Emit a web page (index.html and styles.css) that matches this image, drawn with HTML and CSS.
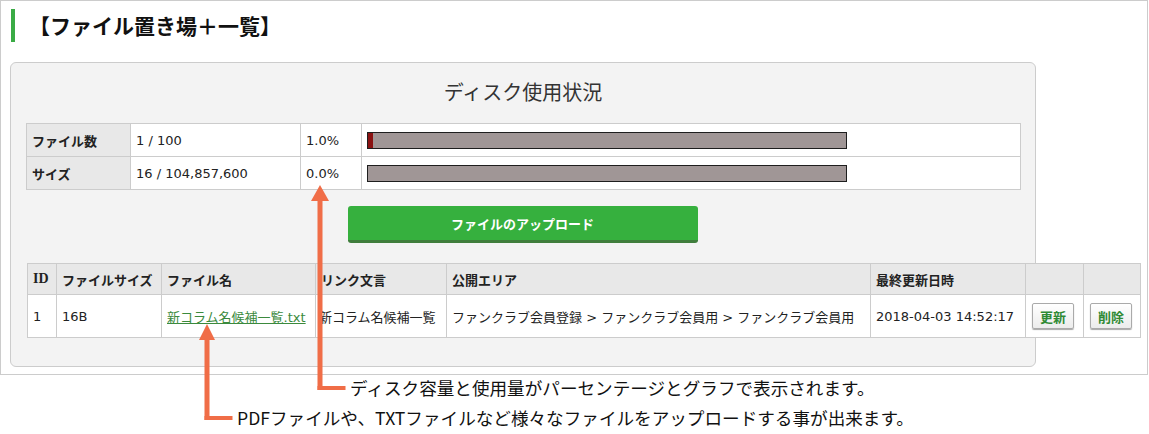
FILE: index.html
```html
<!DOCTYPE html>
<html lang="ja">
<head>
    <meta charset="UTF-8">
    <meta name="viewport" content="width=device-width, initial-scale=1.0">
    <title>ファイル置き場＋一覧</title>
    <link rel="stylesheet" href="styles.css">
</head>
<body>
    <div class="frame">
        <h2 class="heading">【ファイル置き場＋一覧】</h2>

        <div class="panel">
            <h3 class="panel-title">ディスク使用状況</h3>

            <table class="disk">
                <tr>
                    <th>ファイル数</th>
                    <td class="amount">1 / 100</td>
                    <td class="rate">1.0%</td>
                    <td><div class="bar"><div class="bar-fill" style="width: 1%"></div></div></td>
                </tr>
                <tr>
                    <th>サイズ</th>
                    <td class="amount">16 / 104,857,600</td>
                    <td class="rate">0.0%</td>
                    <td><div class="bar"><div class="bar-fill" style="width: 0%"></div></div></td>
                </tr>
            </table>

            <button class="upload">ファイルのアップロード</button>

            <table class="files">
                <colgroup>
                    <col style="width: 29px">
                    <col style="width: 105px">
                    <col style="width: 154px">
                    <col style="width: 131px">
                    <col style="width: 424px">
                    <col style="width: 155px">
                    <col style="width: 58px">
                    <col style="width: 57px">
                </colgroup>
                <thead>
                    <tr>
                        <th class="id">ID</th>
                        <th>ファイルサイズ</th>
                        <th>ファイル名</th>
                        <th>リンク文言</th>
                        <th>公開エリア</th>
                        <th>最終更新日時</th>
                        <th></th>
                        <th></th>
                    </tr>
                </thead>
                <tbody>
                    <tr>
                        <td>1</td>
                        <td>16B</td>
                        <td><a href="#">新コラム名候補一覧.txt</a></td>
                        <td class="tight">新コラム名候補一覧</td>
                        <td>ファンクラブ会員登録 &gt; ファンクラブ会員用 &gt; ファンクラブ会員用</td>
                        <td>2018-04-03 14:52:17</td>
                        <td><button class="small-btn">更新</button></td>
                        <td><button class="small-btn">削除</button></td>
                    </tr>
                </tbody>
            </table>
        </div>
    </div>

    <!-- 説明用の矢印 -->
    <svg class="arrow arrow-disk" width="40" height="210" viewBox="0 0 40 210">
        <polygon points="12,0 3,16 21,16" />
        <rect x="9.5" y="14" width="5" height="191" />
        <rect x="9.5" y="201" width="28" height="4" />
    </svg>
    <p class="note note-disk">ディスク容量と使用量がパーセンテージとグラフで表示されます。</p>

    <svg class="arrow arrow-file" width="40" height="100" viewBox="0 0 40 100">
        <polygon points="12,0 4,16 20,16" />
        <rect x="9.5" y="14" width="5" height="82" />
        <rect x="9.5" y="92" width="28" height="4" />
    </svg>
    <p class="note note-file">PDFファイルや、TXTファイルなど様々なファイルをアップロードする事が出来ます。</p>
</body>
</html>
```

FILE: styles.css
```css
body {
    margin: 0;
    font-family: "Noto Sans CJK JP", "Noto Sans", sans-serif;
    color: #222;
    background-color: #fff;
    position: relative;
    height: 434px;
}
.frame {
    width: 1148px;
    height: 375px;
    box-sizing: border-box;
    border: 1px solid #ccc;
}
.heading {
    margin: 8px 0 0 10px;
    height: 33px;
    line-height: 33px;
    border-left: 4px solid #3aab45;
    padding-left: 14px;
    font-size: 21px;
    font-weight: bold;
    color: #111;
}
.panel {
    margin: 20px 0 0 9px;
    width: 1026px;
    height: 305px;
    box-sizing: border-box;
    background-color: #f3f3f3;
    border: 1px solid #ccc;
    border-radius: 6px;
    padding: 14px 0 0 15px;
}
.panel-title {
    margin: 0;
    line-height: 30px;
    font-size: 20px;
    font-weight: normal;
    text-align: center;
    color: #333;
    padding-right: 15px;
}

/* ディスク使用状況 */
.disk {
    margin-top: 16px;
    width: 995px;
    border-collapse: collapse;
    table-layout: fixed;
    background-color: #fff;
    font-family: "DejaVu Sans", "Noto Sans CJK JP", sans-serif;
    font-size: 13px;
}
.disk th, .disk td {
    border: 1px solid #ccc;
    height: 32px;
    padding: 0 5px;
    text-align: left;
}
.disk th {
    width: 93px;
    background-color: #e8e8e8;
    font-family: "Noto Sans CJK JP", sans-serif;
    font-weight: bold;
}
.disk .amount {
    width: 159px;
}
.disk .rate {
    width: 50px;
}
.bar {
    width: 480px;
    height: 17px;
    box-sizing: border-box;
    border: 1px solid #1e1e1e;
    background-color: #a09696;
}
.bar-fill {
    height: 100%;
    background-color: #8a1212;
}

/* アップロードボタン */
.upload {
    display: block;
    margin: 16px auto 0;
    position: relative;
    left: -8px;
    width: 350px;
    height: 37px;
    box-sizing: border-box;
    border: none;
    border-bottom: 3px solid #3f7d3c;
    border-radius: 3px;
    background-color: #36b03e;
    color: #fff;
    font-family: inherit;
    font-size: 13px;
    font-weight: bold;
    padding: 0;
}

/* ファイル一覧 */
.files {
    margin: 20px 0 0 1px;
    width: 1114px;
    border-collapse: collapse;
    table-layout: fixed;
    background-color: #fff;
    font-family: "DejaVu Sans", "Noto Sans CJK JP", sans-serif;
    font-size: 13px;
}
.files th, .files td {
    border: 1px solid #ccc;
    padding: 0 5px;
    text-align: left;
    white-space: nowrap;
}
.files th {
    height: 30px;
    background-color: #e8e8e8;
    font-family: "Noto Sans CJK JP", sans-serif;
    font-weight: bold;
}
.files th.id {
    font-family: "Liberation Serif", serif;
    font-size: 14px;
}
.files td {
    height: 42px;
}
.files td.tight {
    padding-left: 3px;
}
.files a {
    color: #3b8a3d;
    text-decoration: underline;
}
.small-btn {
    width: 42px;
    height: 26px;
    margin-left: 1px;
    border: 1px solid #aaa;
    border-radius: 2px;
    background: linear-gradient(#ffffff, #ececec);
    box-shadow: 0 1px 1px rgba(0, 0, 0, 0.35);
    color: #2f8a34;
    font-family: "Noto Sans CJK JP", sans-serif;
    font-size: 13px;
    font-weight: bold;
    padding: 0;
}

/* 説明 */
.arrow {
    position: absolute;
    fill: #f06d47;
}
.arrow-disk {
    left: 308px;
    top: 185px;
}
.arrow-file {
    left: 195px;
    top: 324px;
}
.note {
    position: absolute;
    margin: 0;
    font-size: 17.6px;
    line-height: 22px;
    color: #111;
    white-space: nowrap;
}
.note-disk {
    left: 350px;
    top: 377px;
}
.note-file {
    left: 237px;
    top: 407px;
}
```
